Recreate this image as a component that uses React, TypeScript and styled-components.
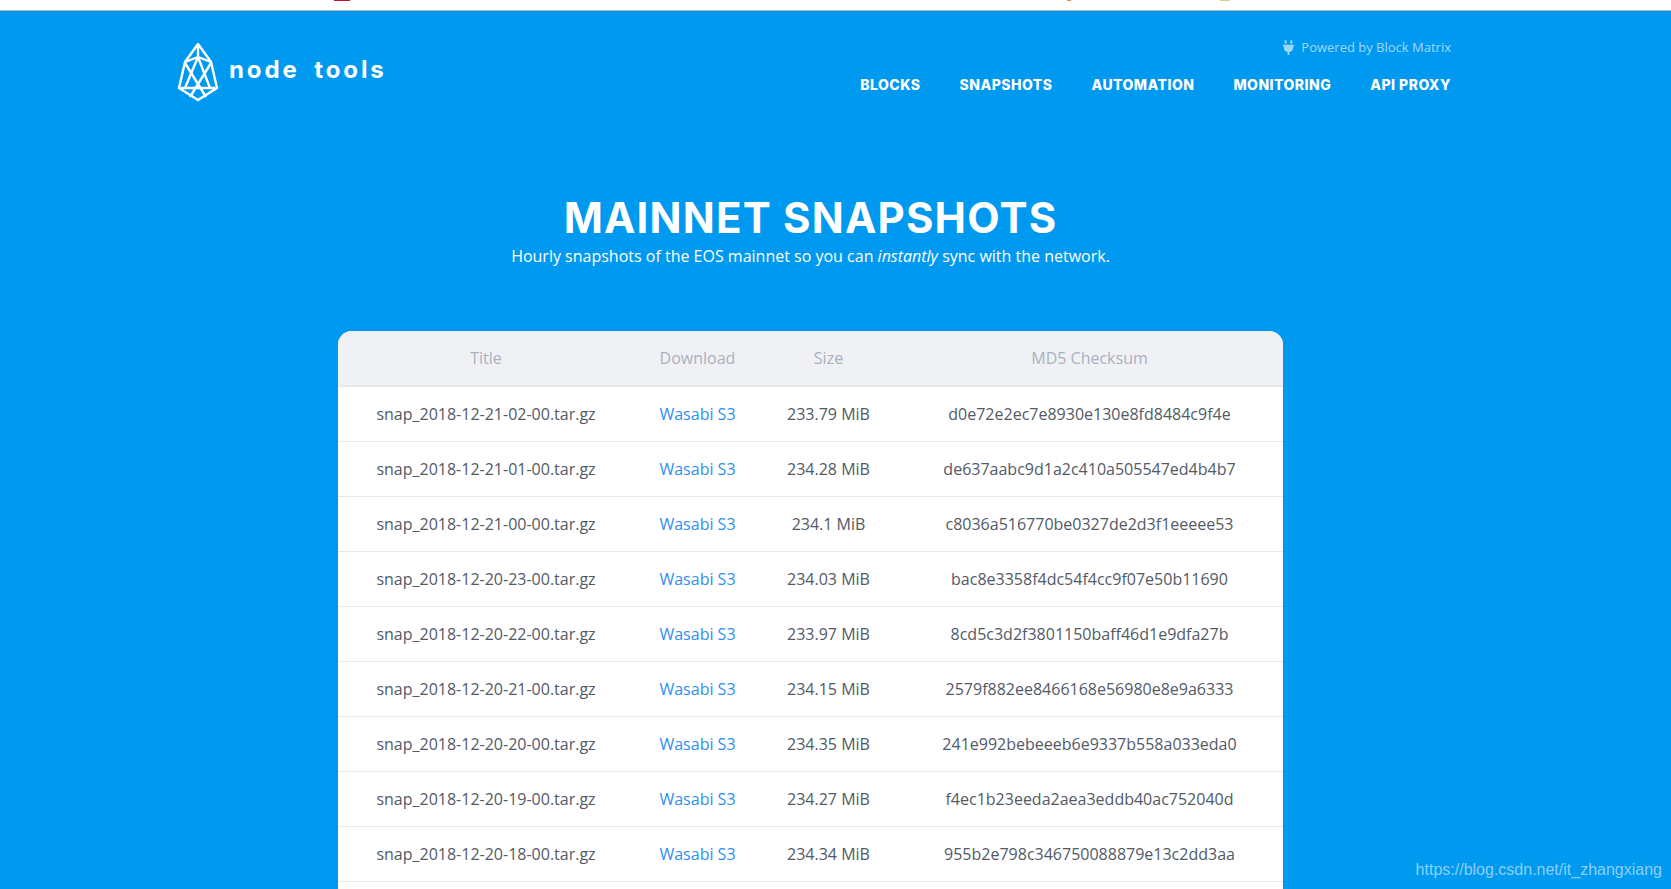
import React from 'react';
import styled, { createGlobalStyle } from 'styled-components';
import { FaPlug } from 'react-icons/fa';

const GlobalStyle = createGlobalStyle`
  html, body {
    margin: 0;
    height: 100%;
    overflow: hidden;
    background: #0099f0;
    font-family: "Open Sans", sans-serif;
  }
`;

const snapshots = [
  { title: 'snap_2018-12-21-02-00.tar.gz', size: '233.79 MiB', md5: 'd0e72e2ec7e8930e130e8fd8484c9f4e' },
  { title: 'snap_2018-12-21-01-00.tar.gz', size: '234.28 MiB', md5: 'de637aabc9d1a2c410a505547ed4b4b7' },
  { title: 'snap_2018-12-21-00-00.tar.gz', size: '234.1 MiB', md5: 'c8036a516770be0327de2d3f1eeeee53' },
  { title: 'snap_2018-12-20-23-00.tar.gz', size: '234.03 MiB', md5: 'bac8e3358f4dc54f4cc9f07e50b11690' },
  { title: 'snap_2018-12-20-22-00.tar.gz', size: '233.97 MiB', md5: '8cd5c3d2f3801150baff46d1e9dfa27b' },
  { title: 'snap_2018-12-20-21-00.tar.gz', size: '234.15 MiB', md5: '2579f882ee8466168e56980e8e9a6333' },
  { title: 'snap_2018-12-20-20-00.tar.gz', size: '234.35 MiB', md5: '241e992bebeeeb6e9337b558a033eda0' },
  { title: 'snap_2018-12-20-19-00.tar.gz', size: '234.27 MiB', md5: 'f4ec1b23eeda2aea3eddb40ac752040d' },
  { title: 'snap_2018-12-20-18-00.tar.gz', size: '234.34 MiB', md5: '955b2e798c346750088879e13c2dd3aa' },
];

const navItems = ['BLOCKS', 'SNAPSHOTS', 'AUTOMATION', 'MONITORING', 'API PROXY'];

const Page = styled.div`
  position: relative;
  height: 889px;
  overflow: hidden;
  background: #0099f0;
`;

const TopStrip = styled.div`
  position: relative;
  height: 10px;
  background: #fff;
  border-bottom: 1px solid #b4b8bc;
`;

const Sliver = styled.span<{ $left: number; $width: number; $color: string }>`
  position: absolute;
  top: 0;
  left: ${p => p.$left}px;
  width: ${p => p.$width}px;
  height: 1px;
  background: ${p => p.$color};
`;

const Header = styled.header`
  display: flex;
  justify-content: space-between;
  padding: 21px 220px 0 178px;
`;

const Brand = styled.a`
  display: flex;
  align-items: center;
  gap: 9px;
  padding-top: 11px;
  height: 57px;
  color: #fff;
`;

const BrandText = styled.span`
  position: relative;
  top: -2px;
  font-family: Inter, sans-serif;
  font-weight: 700;
  font-size: 24px;
  letter-spacing: 2.9px;
  word-spacing: 6px;
  white-space: nowrap;
`;

const HeaderRight = styled.div`
  display: flex;
  flex-direction: column;
  align-items: flex-end;
  gap: 19px;
  padding-top: 6px;
`;

const Powered = styled.div`
  display: flex;
  align-items: center;
  gap: 5px;
  font-size: 13px;
  line-height: 18px;
  color: rgba(255, 255, 255, 0.62);
`;

const Nav = styled.nav`
  display: flex;
  gap: 39px;
`;

const NavLink = styled.a`
  font-family: Inter, sans-serif;
  font-weight: 800;
  font-size: 14px;
  line-height: 20px;
  letter-spacing: 0.47px;
  color: #fff;
  white-space: nowrap;
`;

const Main = styled.main`
  display: flex;
  flex-direction: column;
  align-items: center;
  padding-right: 50px;
`;

const Title = styled.h1`
  margin: 91px 0 0;
  font-family: Inter, sans-serif;
  font-weight: 700;
  font-size: 42px;
  line-height: 53px;
  letter-spacing: 1.2px;
  color: #fff;
  white-space: nowrap;
`;

const Subtitle = styled.p`
  margin: 0;
  font-size: 16px;
  line-height: 24px;
  color: #fff;
`;

const Card = styled.div`
  width: 945px;
  margin-top: 63px;
  margin-right: 1px;
  padding-bottom: 40px;
  background: #fff;
  border-radius: 14px 14px 0 0;
  overflow: hidden;
`;

const Table = styled.table`
  width: 100%;
  table-layout: fixed;
  border-collapse: collapse;
  font-size: 16px;
  text-align: center;
`;

const Col = styled.col<{ $width: number }>`
  width: ${p => p.$width}px;
`;

const HeadCell = styled.th`
  height: 54px;
  padding: 0;
  font-weight: 400;
  line-height: 24px;
  color: #a9b1c0;
  background: #f0f1f5;
  border-bottom: 2px solid #e6e8ec;
`;

const Cell = styled.td`
  height: 54px;
  padding: 0;
  line-height: 24px;
  color: #525a66;
  border-bottom: 1px solid #e6e8ec;
  white-space: nowrap;
`;

const DownloadLink = styled.a`
  color: #2f8ff0;
  text-decoration: none;
`;

const Watermark = styled.div`
  position: absolute;
  right: 9px;
  bottom: 9px;
  font-family: "Liberation Sans", sans-serif;
  font-size: 16px;
  line-height: 20px;
  color: rgba(255, 255, 255, 0.55);
`;

const EosLogo = () => (
  <svg width="42" height="60" viewBox="177 41 42 60" fill="none" stroke="#fff" strokeWidth="2.4" strokeLinejoin="round">
    <path d="M197 43 L184 61 L178 87 L197 99 L216 87 L210 61 Z" />
    <path d="M197 43 V56 M184 61 L197 56 L210 61" />
    <path d="M197 56 L184 87 M197 56 L209 87" />
    <path d="M184 62 L205 96 M210 62 L189 96" />
    <path d="M180 87 H214" />
  </svg>
);

export default function App() {
  return (
    <Page>
      <GlobalStyle />
      <TopStrip>
        <Sliver $left={334} $width={16} $color="#c8102e" />
        <Sliver $left={1067} $width={4} $color="#f08a3c" />
        <Sliver $left={1220} $width={10} $color="#c6d98a" />
      </TopStrip>
      <Header>
        <Brand>
          <EosLogo />
          <BrandText>node tools</BrandText>
        </Brand>
        <HeaderRight>
          <Powered>
            <FaPlug size={15} />
            Powered by Block Matrix
          </Powered>
          <Nav>
            {navItems.map(item => (
              <NavLink key={item}>{item}</NavLink>
            ))}
          </Nav>
        </HeaderRight>
      </Header>
      <Main>
        <Title>MAINNET SNAPSHOTS</Title>
        <Subtitle>
          Hourly snapshots of the EOS mainnet so you can <em>instantly</em> sync with the network.
        </Subtitle>
        <Card>
          <Table>
            <colgroup>
              <Col $width={297} />
              <Col $width={126} />
              <Col $width={136} />
              <Col $width={386} />
            </colgroup>
            <thead>
              <tr>
                <HeadCell>Title</HeadCell>
                <HeadCell>Download</HeadCell>
                <HeadCell>Size</HeadCell>
                <HeadCell>MD5 Checksum</HeadCell>
              </tr>
            </thead>
            <tbody>
              {snapshots.map(snap => (
                <tr key={snap.title}>
                  <Cell>{snap.title}</Cell>
                  <Cell>
                    <DownloadLink>Wasabi S3</DownloadLink>
                  </Cell>
                  <Cell>{snap.size}</Cell>
                  <Cell>{snap.md5}</Cell>
                </tr>
              ))}
            </tbody>
          </Table>
        </Card>
      </Main>
      <Watermark>https://blog.csdn.net/it_zhangxiang</Watermark>
    </Page>
  );
}
